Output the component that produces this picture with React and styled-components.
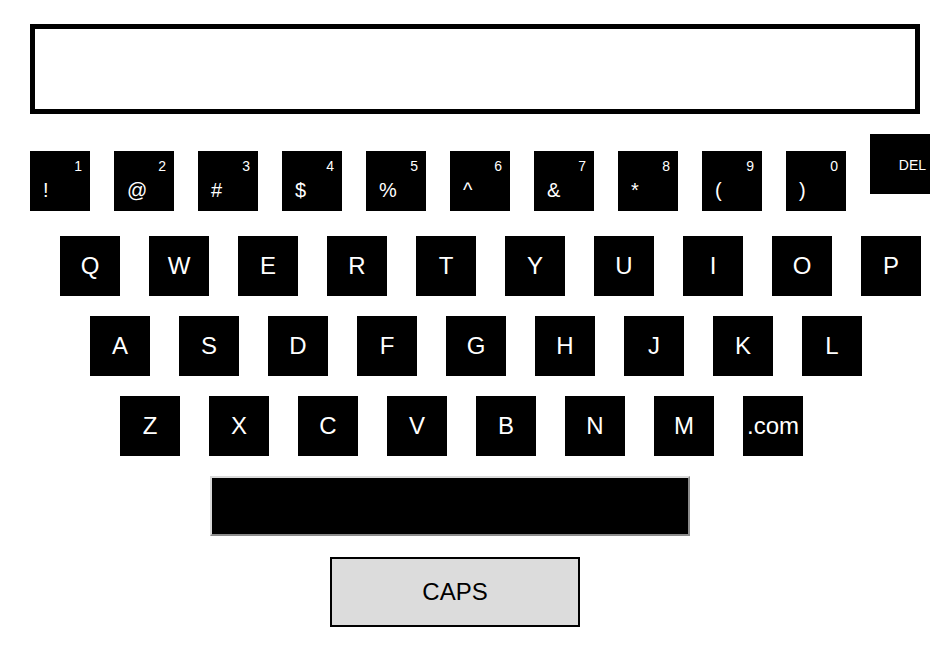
import React from 'react'
import styled, { createGlobalStyle } from 'styled-components';

const GlobalStyle = createGlobalStyle`
  body {
    margin:0;
    background:#fff;
    font-family:"Liberation Sans", Arial, sans-serif;
  }
`;

const Page = styled.div`
  display:flex;
  flex-direction:column;
  align-items:flex-start;
  padding:24px 0 0 30px;
  `;

const Display = styled.div`
  box-sizing:border-box;
  width:890px;
  height:90px;
  border:5px solid #000;
  background:#fff;
`;

const Row = styled.div`
  display:flex;
  align-items:flex-start;
  gap:${({gap})=>gap}px;
  padding-left:${({indent})=>indent}px;
  margin-top:${({top})=>top}px;
`;

const Key = styled.div`
  box-sizing:border-box;
  width:60px;
  height:60px;
  background:#000;
  color:#fff;
  display:flex;
  align-items:center;
  justify-content:center;
  font-size:24px;
  line-height:1;
`;

// number keys: digit top right, symbol bottom left
const NumKey = styled.div`
  box-sizing:border-box;
  width:60px;
  height:60px;
  margin-top:17px;
  background:#000;
  color:#fff;
  display:flex;
  flex-direction:column;
  justify-content:space-between;
  padding:7px 8px 11px 13px;
`;

const Digit = styled.span`
  align-self:flex-end;
  font-size:14px;
  line-height:16px;
`;

const Symbol = styled.span`
  align-self:flex-start;
  font-size:20px;
  line-height:20px;
`;

const DelKey = styled.div`
  box-sizing:border-box;
  width:60px;
  height:60px;
  background:#000;
  color:#fff;
  font-size:14px;
  line-height:16px;
  text-align:right;
  padding:23px 4px 0 0;
`;

const Space = styled.div`
  box-sizing:border-box;
  width:480px;
  height:60px;
  margin:20px 0 0 180px;
  background:#000;
  border:2px solid;
  border-color:#d9d9d9 #8c8c8c #8c8c8c #d9d9d9;
`;

const Caps = styled.div`
  box-sizing:border-box;
  width:250px;
  height:70px;
  margin:21px 0 0 300px;
  background:#dcdcdc;
  border:2px solid #000;
  display:flex;
  align-items:center;
  justify-content:center;
  font-size:24px;
  color:#000;
`;

const numbers = [
  ['1','!'],['2','@'],['3','#'],['4','$'],['5','%'],
  ['6','^'],['7','&'],['8','*'],['9','('],['0',')'],
];

const rows = [
  { keys:['Q','W','E','R','T','Y','U','I','O','P'], indent:30, top:25 },
  { keys:['A','S','D','F','G','H','J','K','L'], indent:60, top:20 },
  { keys:['Z','X','C','V','B','N','M','.com'], indent:90, top:20 },
];

const App = () => {
  return (
    <Page>
      <GlobalStyle/>
      <Display/>

      <Row gap={24} indent={0} top={20}>
        {numbers.map(([d,s])=>(
          <NumKey key={d}>
            <Digit>{d}</Digit>
            <Symbol>{s}</Symbol>
          </NumKey>
        ))}
        <DelKey>DEL</DelKey>
      </Row>

      {rows.map((r,i)=>(
        <Row key={i} gap={29} indent={r.indent} top={r.top}>
          {r.keys.map(k=><Key key={k}>{k}</Key>)}
        </Row>
      ))}

      <Space/>
      <Caps>CAPS</Caps>
    </Page>
  )
}

export default App
